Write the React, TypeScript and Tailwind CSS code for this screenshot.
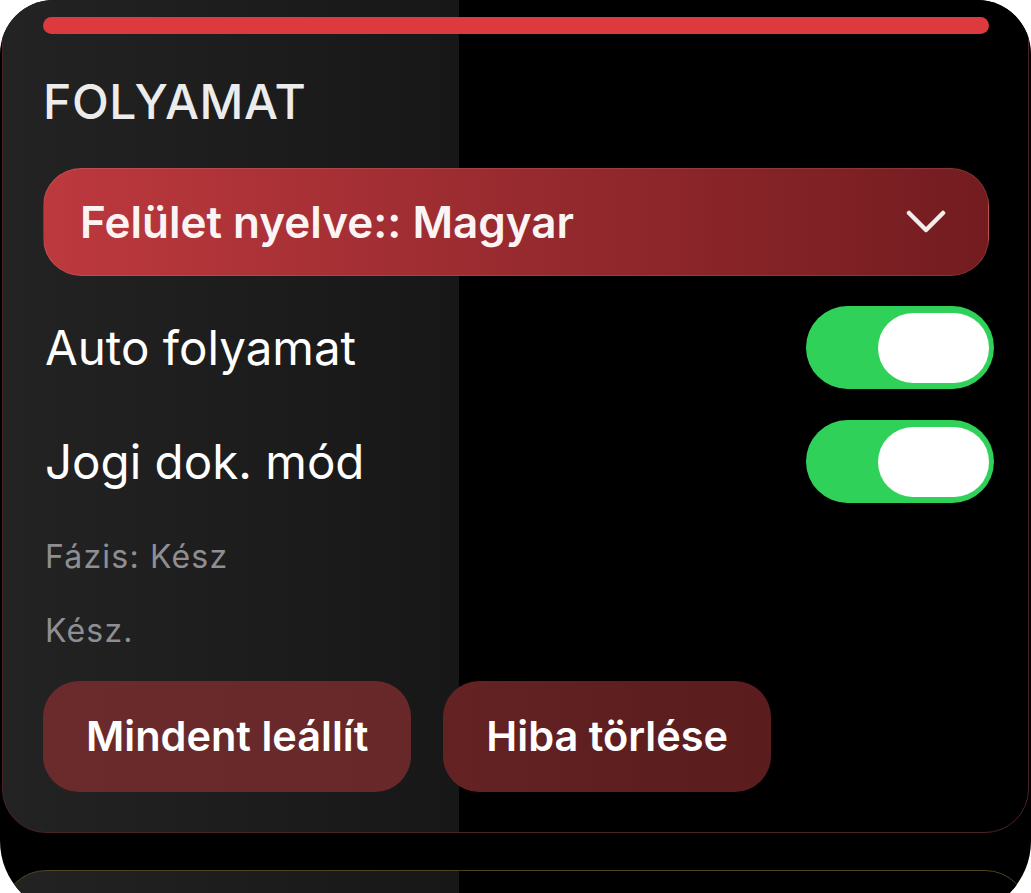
import React from "react";

function Toggle() {
  return (
    <div className="relative -mr-[5px] h-[83px] w-[188px] shrink-0 rounded-full bg-[#30d158]">
      <div className="absolute right-[5px] top-[7px] h-[70px] w-[111px] rounded-full bg-white" />
    </div>
  );
}

export default function App() {
  const font = { fontFamily: "Inter, 'Noto Sans', sans-serif" };
  return (
    <div className="h-[893px] w-full overflow-hidden bg-white" style={font}>
      <div className="h-[915px] overflow-hidden rounded-t-[54px] rounded-b-[74px] bg-black">
        <div className="mx-[2px] -mt-[40px] rounded-[44px] border border-[#4a2327] bg-[linear-gradient(to_right,#232323_0%,#171717_44.5%,#000_44.5%,#000_100%)] pb-[40px] pl-[40px] pr-[39px] pt-[56px]">
          <div className="h-[17px] w-full rounded-full bg-[#dc3a3f]" />
          <div className="mt-[44px] text-[48px] font-medium leading-[48px] tracking-[0.6px] text-[#ececec]">
            FOLYAMAT
          </div>
          <div className="mt-[42px] flex h-[108px] items-center justify-between rounded-[38px] border border-white/10 bg-[linear-gradient(to_right,#bd393e,#731c20)] pl-[36px] pr-[42px]">
            <span className="text-[44px] font-semibold leading-none text-[#fbf4f4]">
              Felület nyelve:: Magyar
            </span>
            <svg width="40" height="24" viewBox="0 0 40 24" fill="none">
              <polyline
                points="3,3 20,20 37,3"
                stroke="#f3ecec"
                strokeWidth="4.5"
                strokeLinecap="round"
                strokeLinejoin="round"
              />
            </svg>
          </div>
          <div className="mt-[30px] flex items-center justify-between">
            <span className="pl-[2px] text-[47.5px] leading-none text-white">Auto folyamat</span>
            <Toggle />
          </div>
          <div className="mt-[31px] flex items-center justify-between">
            <span className="pl-[2px] text-[47.5px] leading-none text-white">Jogi dok. mód</span>
            <Toggle />
          </div>
          <div className="mt-[36px] pl-[2px] text-[32px] leading-[36px] tracking-[1.2px] text-[#8e8e93]">Fázis: Kész</div>
          <div className="mt-[38px] pl-[2px] text-[32px] leading-[36px] tracking-[1.2px] text-[#8e8e93]">Kész.</div>
          <div className="mt-[32px] flex gap-[32px]">
            <button className="flex h-[111px] items-center rounded-[36px] bg-[linear-gradient(to_right,#6b2a2b,#682829)] px-[43px] text-[41.5px] font-semibold leading-none text-white">
              Mindent leállít
            </button>
            <button className="flex h-[111px] items-center rounded-[36px] bg-[linear-gradient(to_right,#642223,#5a1c1d)] px-[43px] text-[41.5px] font-semibold leading-none text-white">
              Hiba törlése
            </button>
          </div>
        </div>
        <div className="mx-[2px] mt-[37px] h-[200px] rounded-[44px] border border-[#4d4520] bg-[linear-gradient(to_right,#232323_0%,#171717_44.5%,#000_44.5%,#000_100%)]" />
      </div>
    </div>
  );
}
